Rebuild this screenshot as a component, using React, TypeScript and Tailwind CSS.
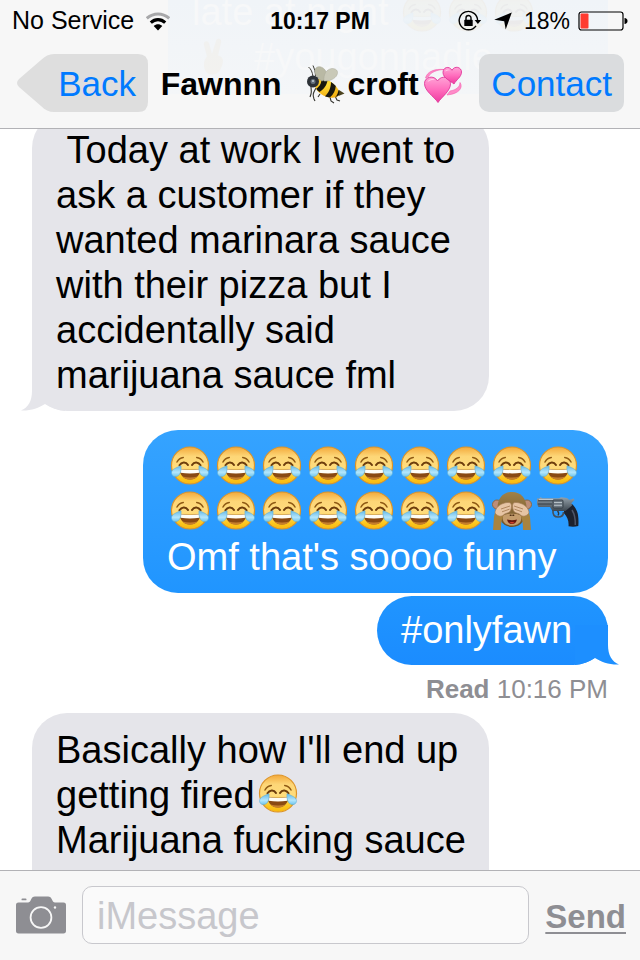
import type { ReactNode } from 'react';

// Shared gradients for the emoji drawings
function EmojiDefs() {
  return (
    <svg className="absolute h-0 w-0" aria-hidden="true">
      <defs>
        <linearGradient id="face" x1="0" y1="0" x2="0" y2="1">
          <stop offset="0" stopColor="#f3a93a" />
          <stop offset="0.25" stopColor="#fdd677" />
          <stop offset="0.55" stopColor="#ffdc7c" />
          <stop offset="0.85" stopColor="#fcc61c" />
          <stop offset="1" stopColor="#f9b80f" />
        </linearGradient>
        <linearGradient id="tear" x1="0" y1="0" x2="0" y2="1">
          <stop offset="0" stopColor="#63b9ea" />
          <stop offset="0.6" stopColor="#b4e6fb" />
          <stop offset="1" stopColor="#6ec5ee" />
        </linearGradient>
        <linearGradient id="fur" x1="0" y1="0" x2="0" y2="1">
          <stop offset="0" stopColor="#a08148" />
          <stop offset="1" stopColor="#6f5228" />
        </linearGradient>
        <linearGradient id="steel" x1="0" y1="0" x2="0" y2="1">
          <stop offset="0" stopColor="#97a3ac" />
          <stop offset="1" stopColor="#3d4750" />
        </linearGradient>
        <linearGradient id="pink" x1="0" y1="0" x2="0" y2="1">
          <stop offset="0" stopColor="#ffa3d6" />
          <stop offset="0.5" stopColor="#ff6dbd" />
          <stop offset="1" stopColor="#ee3b9f" />
        </linearGradient>
        <radialGradient id="amber" cx="0.5" cy="0.3" r="0.8">
          <stop offset="0" stopColor="#ffe03a" />
          <stop offset="1" stopColor="#f2a90c" />
        </radialGradient>
      </defs>
    </svg>
  );
}

const inlineEmoji = 'inline-block h-[42px] w-[46px] align-[-7px]';

function Joy() {
  return (
    <svg viewBox="0 0 46 42" className={inlineEmoji} role="img" aria-label="tears of joy">
      <circle cx="23" cy="20.500" r="18.500" fill="url(#face)" stroke="#dd9428" strokeWidth="1.200" />
      <path d="M10 17c1.300-2.500 3.500-4.200 6.300-4.600M36 17c-1.300-2.500-3.500-4.200-6.300-4.600" fill="none" stroke="#8f5a14" strokeWidth="1.500" strokeLinecap="round" />
      <path d="M12.500 20.300c2-3.600 6.300-4 8.500-.4M25 19.900c2.200-3.600 6.500-3.200 8.500.4" fill="none" stroke="#6d3d0c" strokeWidth="2" strokeLinecap="round" />
      <path d="M12.500 24c6.500 1.100 14.500 1.100 21 0-.3 6.300-4.400 10.400-10.500 10.400S12.800 30.300 12.500 24z" fill="#8a4a12" />
      <path d="M12.800 24.200c6.500 1 13.900 1 20.400 0l-.8 3.500c-6 1-12.800 1-18.800 0z" fill="#fffdf6" />
      <path d="M15.500 31.500c4.500 1.400 10.500 1.400 15 0-2 2.300-4.500 3.100-7.500 3.100s-5.500-.8-7.500-3.100z" fill="#c67f2c" />
      <path d="M14 20.800c.4 5-.8 10.200-5 10.800-3.300.3-5-2.300-4.300-4.800.8-2.600 4.800-4.400 9.300-6z" fill="url(#tear)" stroke="#5eaed8" strokeWidth="0.600" />
      <path d="M32 20.800c-.4 5 .8 10.200 5 10.800 3.300.3 5-2.300 4.300-4.800-.8-2.600-4.800-4.400-9.300-6z" fill="url(#tear)" stroke="#5eaed8" strokeWidth="0.600" />
    </svg>
  );
}

function Monkey() {
  return (
    <svg viewBox="0 0 46 42" className={inlineEmoji} role="img" aria-label="see no evil monkey">
      <circle cx="8" cy="14.500" r="4.500" fill="#bd8d78" stroke="#8d6840" strokeWidth="1" />
      <circle cx="38" cy="14.500" r="4.500" fill="#bd8d78" stroke="#8d6840" strokeWidth="1" />
      <path d="M23 2C14 2 8.500 8.500 8.500 18c0 10 4.500 19 14.500 19S37.500 28 37.500 18C37.500 8.500 32 2 23 2z" fill="url(#fur)" />
      <path d="M14 26c2-3 16-3 18 0 1.500 6-3 9.500-9 9.500S12.500 32 14 26z" fill="#c49c6c" />
      <path d="M18 29.500c3.500.9 6.500.9 10 0-.8 3.200-2.500 4.500-5 4.500s-4.200-1.300-5-4.500z" fill="#6a1a10" />
      <path d="M20.300 32.500c1.700-.8 3.700-.8 5.400 0-1.500 1.400-3.900 1.400-5.400 0z" fill="#d9442f" />
      <path d="M21.300 25.300h.8M23.900 25.300h.8" stroke="#4d3015" strokeWidth="1.400" strokeLinecap="round" />
      <path d="M4 40l1-13c.5-4 2-7 5-8l5 6c-2.500 3-3 9-3 15z" fill="#a8833f" />
      <path d="M42 40l-1-13c-.5-4-2-7-5-8l-5 6c2.500 3 3 9 3 15z" fill="#a8833f" />
      <path d="M6 23c0-4 3.500-8 8-9.500 3-1.200 7.500-1.500 8 .2 1 2.300.3 6.500-1.500 8.300-1.800 1.500-4 1-5.500 2.500-2 2.500-6 2.500-9-1.500z" fill="#e6c4a4" stroke="#a47b54" strokeWidth="0.700" />
      <path d="M40 23c0-4-3.500-8-8-9.500-3-1.200-7.500-1.500-8 .2-1 2.300-.3 6.500 1.500 8.300 1.800 1.500 4 1 5.500 2.500 2 2.500 6 2.500 9-1.500z" fill="#e6c4a4" stroke="#a47b54" strokeWidth="0.700" />
      <path d="M12 19l9-3M13 21.800l7.500-2.600M34 19l-9-3M33 21.800l-7.500-2.600" stroke="#a98058" strokeWidth="0.900" fill="none" />
    </svg>
  );
}

function Pistol() {
  return (
    <svg viewBox="0 0 46 42" className={inlineEmoji} role="img" aria-label="pistol">
      <path d="M29 14.500l8-.5c3 3 5.500 7 6 11 .6 4 .6 8 .3 11-3 1-6.800 1-9.800.3.5-5-1-9.500-4.500-13z" fill="#1d222e" />
      <path d="M37 20c2.500 4 3.500 9 3.300 15" fill="none" stroke="#4d566a" strokeWidth="1.500" />
      <path d="M18 20c-.5 5 1.500 7 5 7s5.500-2 5.500-5" fill="none" stroke="#46505a" strokeWidth="1.700" />
      <path d="M22.500 21c1.500 1.500 1.500 3 .5 4.500" fill="none" stroke="#2f373f" strokeWidth="1.300" />
      <path d="M2 8.500l3-.3.600-1.200 1.500 1.200H24l2-1 6 .8 2.500 2 4-1.500 1 1.500-3 3 .5 2.500-6.500 5.500H17.500L15 17H3.500L2 14z" fill="url(#steel)" />
      <path d="M3 10.800h15M3 14h14" stroke="#303941" strokeWidth="0.900" />
      <rect x="18" y="10" width="10" height="8" rx="1" fill="#6b7680" stroke="#2f373f" strokeWidth="0.800" />
      <path d="M19 12.500h8M19 15.300h8" stroke="#c0c9cf" strokeWidth="0.900" />
      <path d="M4 9.400h14" stroke="#ccd4d9" strokeWidth="0.900" />
    </svg>
  );
}

function Bee() {
  return (
    <svg viewBox="0 0 40 40" className="mr-0.5 h-10 w-10 shrink-0" role="img" aria-label="bee">
      <path d="M7 13C6.500 8 5 5 2.500 3M9.500 12C9.500 8 8.500 5 7 1.500" fill="none" stroke="#3d3d36" strokeWidth="1" />
      <path d="M5 19c-.5 5 1 8 0 11l-1 3M10 24c-2 4-4 6-2 11l1 2M24 33l1 4 3 2M29 32l2 4 3 1M14 30l-2 3" fill="none" stroke="#33332e" strokeWidth="1.100" />
      <path d="M33 26l5.500 3.500-6 2.500z" fill="#4b421e" />
      <path d="M9 17c4-4 10-4 16 1 6 4 9 9 8 13-2 3-8 3.500-13 1.500C13 30 7 24 9 17z" fill="url(#amber)" />
      <path d="M15.500 14.500c3 0 5 1 6 2-1 5-3 8-8 11.500-1.500-1-2.500-2-3.300-3.200 4-2.800 5.300-6 5.300-10.300z" fill="#19180f" />
      <path d="M25 18c2 1.200 3.500 2.600 4.800 4-.3 4.500-2.300 8.500-5.800 11.300-2 0-3.500-.3-5-1 3.500-3.300 6-8.300 6-14.300z" fill="#19180f" />
      <path d="M32.500 25.500c1 2 1 4 .5 5.500-1 1-2.300 1.700-3.700 2 2-2 3-4.700 3.200-7.500z" fill="#19180f" />
      <path d="M16 17C9 13 7.500 7 10 4c3-3 9-.5 10.500 5 .6 3-1 7-4.500 8z" fill="#b9b9a4" stroke="#a3a391" strokeWidth="0.500" />
      <path d="M18 17c-1-7 3-12 8-12.500 5.500 0 7 4 4 8-2.500 3-7.500 5-12 4.500z" fill="#c9c9b8" stroke="#a9a998" strokeWidth="0.500" />
      <circle cx="7" cy="17.500" r="6" fill="#2c3137" />
      <circle cx="7" cy="17.500" r="2.500" fill="#66717c" />
      <circle cx="7" cy="17" r="1" fill="#c5d0d8" />
    </svg>
  );
}

function Hearts() {
  return (
    <svg viewBox="0 0 40 40" className="ml-1 h-10 w-10 shrink-0" role="img" aria-label="revolving hearts">
      <path d="M2.500 14C4 7.500 12 4.500 21 5.500c-7 .3-13 2.500-15.500 7zM37 18.500c3.500 5-1 11.500-13 12.500l3-4c6-1 10-4 10-8.500z" fill="#ff8bc8" stroke="#f360ae" strokeWidth="0.600" />
      <path d="M15 38.500C11 32.500 1.500 27 1.500 19.500c0-6.800 9.500-9 13-2.500 4-6.500 13-4 13 2.700 0 7.300-8.500 12.800-12.500 18.800z" fill="url(#pink)" stroke="#e0389a" strokeWidth="0.900" />
      <path d="M31 20c-3.500-3-11-6-11-11.500C20 3.300 26 1.300 29 6.300c2.500-5 9.500-3.300 9.500 1.700 0 5-5.500 8-7.500 12z" fill="url(#pink)" stroke="#e0389a" strokeWidth="0.900" />
      <path d="M4.500 18c1-3 5-4 7.500-2-3-.3-5.500.3-7.500 2zM22 7.500c.8-2 3.300-2.700 5-1.300-2 0-3.500.3-5 1.300z" fill="#ffd0ea" />
    </svg>
  );
}

function Victory() {
  return (
    <svg viewBox="0 0 46 42" className={inlineEmoji} aria-hidden="true">
      <path d="M12 8c-1-4 4-5 5-1.500L20 17l4-13c1-3.500 6-2.500 5 1.500l-3 13c5 1 6 5 4 10-2 6-5 9-10 9s-8-4-8-10c0-3 1-6 3-8z" fill="#f0b25a" />
    </svg>
  );
}

function WifiIcon() {
  return (
    <svg viewBox="0 0 24 19" className="h-[19px] w-6" aria-hidden="true">
      <path d="M.8 6.400C7.500.6 16.500.6 23.200 6.400" fill="none" stroke="#a8a8aa" strokeWidth="3" />
      <path d="M4.800 10.600c4.300-3.900 10.100-3.900 14.400 0" fill="none" stroke="#000" strokeWidth="3.200" />
      <path d="M12 18.500l-4.300-4.600c2.500-2.300 6.100-2.300 8.600 0z" fill="#000" />
    </svg>
  );
}

function RotationLockIcon() {
  return (
    <svg viewBox="0 0 24 22" className="h-[22px] w-6" aria-hidden="true">
      <path d="M18 15.800A9.200 9.200 0 1 1 19.600 10.500" fill="none" stroke="#000" strokeWidth="1.400" />
      <path d="M16.600 10h6.600l-3.300 4z" fill="#000" />
      <rect x="6.300" y="9.800" width="8.400" height="6.200" rx="0.600" fill="#000" />
      <path d="M8 10.300V8a2.500 2.500 0 0 1 5 0v2.300" fill="none" stroke="#000" strokeWidth="1.400" />
    </svg>
  );
}

function LocationIcon() {
  return (
    <svg viewBox="0 0 18 18" className="h-[18px] w-[18px]" aria-hidden="true">
      <path d="M17.800.5L11.700 17.500 10.200 9.200.2 7.800z" fill="#000" />
    </svg>
  );
}

function BatteryIcon() {
  return (
    <svg viewBox="0 0 50 20" className="h-5 w-[50px]" aria-hidden="true">
      <rect x="1" y="1" width="44" height="18" rx="2.500" fill="none" stroke="#000" strokeWidth="1.200" />
      <rect x="2.500" y="2.500" width="8" height="15" rx="1" fill="#ff3b30" />
      <path d="M46.500 7c2 .3 3 1.300 3 3s-1 2.700-3 3z" fill="#000" />
    </svg>
  );
}

function CameraIcon() {
  return (
    <svg viewBox="0 0 50 38" className="h-[38px] w-[50px]" aria-hidden="true">
      <path d="M2.500 6.500H12c1.500 0 2.200-1 2.800-2.500C15.800 1.500 17 .5 19 .5h13c2 0 3.200 1 4.200 3.500.6 1.500 1.300 2.500 2.800 2.500h8.500C49.300 6.500 50 7.500 50 9v26c0 1.600-.8 2.500-2.500 2.500h-45C.8 37.500 0 36.600 0 35V9c0-1.500.7-2.500 2.500-2.500z" fill="#8e8e93" />
      <rect x="5.500" y="2.500" width="5" height="1.800" rx="0.900" fill="#8e8e93" />
      <circle cx="25" cy="21.500" r="10.400" fill="none" stroke="#f7f7f7" strokeWidth="1.800" />
      <circle cx="39" cy="11.500" r="1.200" fill="#f7f7f7" />
    </svg>
  );
}

const tailPath = 'M11 0V20C11 30 7 37 0 39.500C9 40 18 37 24 33C30 37 37 39.500 44 40V0z';

type BubbleProps = {
  className: string;
  tail?: 'left' | 'right';
  children: ReactNode;
};

function Bubble({ className, tail, children }: BubbleProps) {
  return (
    <div className={`relative max-w-full rounded-[35px] px-6 text-[38px] leading-[45px] whitespace-pre-wrap ${className}`}>
      {tail === 'left' && (
        <svg viewBox="0 0 44 40" className="absolute bottom-0 -left-[11px] h-10 w-11" aria-hidden="true">
          <path d={tailPath} fill="#e5e5ea" />
        </svg>
      )}
      {tail === 'right' && (
        <svg viewBox="0 0 44 40" className="absolute -right-[11px] bottom-0 h-10 w-11" aria-hidden="true">
          <path d={tailPath} transform="matrix(-1 0 0 1 44 0)" fill="#1d8fff" />
        </svg>
      )}
      <div className="relative">{children}</div>
    </div>
  );
}

function StatusBar() {
  return (
    <div className="relative grid h-10 grid-cols-[1fr_auto_1fr] items-center px-3 pt-0.5 text-[25px]">
      <div className="flex items-center gap-3">
        <span>No Service</span>
        <WifiIcon />
      </div>
      <span className="text-[23px] font-bold">10:17 PM</span>
      <div className="flex items-center justify-end gap-3">
        <RotationLockIcon />
        <LocationIcon />
        <div className="flex items-center gap-2">
          <span className="text-[23px]">18%</span>
          <BatteryIcon />
        </div>
      </div>
    </div>
  );
}

// Message scrolled up under the translucent bar
function ScrolledUnder() {
  return (
    <div
      aria-hidden="true"
      className="absolute top-0 right-8 h-[94px] w-[440px] bg-linear-to-b from-[#f0f4f8] to-[#f4f6f8] pl-6 text-[38px] leading-[45px] whitespace-pre text-[#f7f8f9]"
    >
      <div className="-mt-2.5 flex items-center">
        <span>late at night </span>
        <span className="flex opacity-5">
          <Joy />
          <Joy />
          <Joy />
        </span>
      </div>
      <div className="flex items-center">
        <span className="flex pr-4 opacity-5">
          <Victory />
        </span>
        #yougonnadie
      </div>
    </div>
  );
}

function Header() {
  return (
    <header className="relative z-10 overflow-hidden border-b border-[#b2b2b6] bg-[#f7f7f7]">
      <ScrolledUnder />
      <StatusBar />
      <nav className="relative flex items-center justify-between px-4 pt-3.5 pb-4">
        <button className="relative h-[58px] w-[132px] pt-0.5 pr-3 text-right text-[35px] text-[#007aff]">
          <svg viewBox="0 0 132 58" className="absolute inset-0 h-full w-full" aria-hidden="true">
            <path d="M38 0H122Q132 0 132 10V48Q132 58 122 58H38C33 58 29 56 25 52L3 33Q-1 29 3 25L25 6C29 2 33 0 38 0z" fill="#dedede" />
          </svg>
          <span className="relative">Back</span>
        </button>
        <h1 className="flex items-center pt-0.5 pr-1 text-[32px] font-bold">
          <span className="pr-6">Fawnnn</span>
          <Bee />
          <span>croft</span>
          <Hearts />
        </h1>
        <button className="h-[58px] rounded-[10px] bg-[#dadcde] px-3 pt-0.5 text-[35px] text-[#007aff]">Contact</button>
      </nav>
    </header>
  );
}

function Composer() {
  return (
    <form className="flex items-center gap-4 border-t border-[#b2b2b6] bg-[#f7f7f7] pt-[15px] pr-3.5 pb-4 pl-4" onSubmit={(e) => e.preventDefault()}>
      <button type="button" aria-label="Camera">
        <CameraIcon />
      </button>
      <input
        type="text"
        aria-label="iMessage"
        placeholder="iMessage"
        className="h-[58px] min-w-0 flex-1 rounded-[10px] border border-[#c8c8cd] bg-[#fafafa] px-3.5 pt-0.5 text-[38px] text-black placeholder:text-[#c7c7cc]"
      />
      <button type="submit" className="pt-1 text-[33px] font-bold text-[#8e8e93] underline decoration-2 underline-offset-4">
        Send
      </button>
    </form>
  );
}

export default function App() {
  return (
    <div className="flex h-screen flex-col bg-white font-['Liberation_Sans',Arial,sans-serif] text-black">
      <EmojiDefs />
      <Header />
      <main className="flex min-h-0 flex-1 flex-col overflow-hidden px-8">
        <Bubble className="-mt-4 w-[457px] shrink-0 self-start bg-[#e5e5ea] pt-[15px] pr-4 pb-[13px]" tail="left">
          {' Today at work I went to ask a customer if they wanted marinara sauce with their pizza but I accidentally said marijuana sauce fml'}
        </Bubble>

        <Bubble className="mt-[19px] w-[465px] shrink-0 self-end bg-linear-to-b from-[#35a3ff] to-[#2095ff] pt-[15px] pb-[13px] text-white">
          {Array.from({ length: 16 }, (_, i) => (
            <Joy key={i} />
          ))}
          <Monkey />
          <Pistol />
          <br />
          Omf that's soooo funny
        </Bubble>

        <Bubble className="mt-[3px] w-[231px] shrink-0 self-end bg-linear-to-b from-[#2095ff] to-[#1b8cff] py-3 text-white" tail="right">
          #onlyfawn
        </Bubble>

        <p className="shrink-0 self-end text-[26px] leading-[48px] text-[#8e8e93]">
          <span className="font-bold">Read</span> 10:16 PM
        </p>

        <Bubble className="w-[457px] shrink-0 self-start bg-[#e5e5ea] pt-[15px] pr-4 pb-12">
          Basically how I'll end up getting fired
          <Joy />
          <br />
          Marijuana fucking sauce
        </Bubble>
      </main>
      <Composer />
    </div>
  );
}
